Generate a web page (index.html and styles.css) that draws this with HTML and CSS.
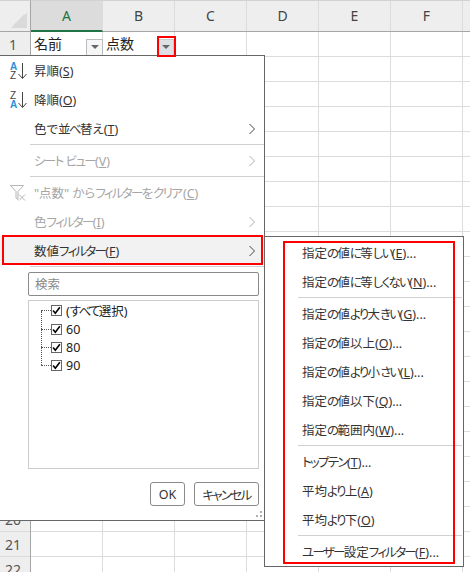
FILE: index.html
```html
<!DOCTYPE html>
<html lang="ja">
<head>
<meta charset="utf-8">
<title>数値フィルター</title>
<link rel="stylesheet" href="styles.css">
</head>
<body>
<div class="sheet">
  <div class="corner"><span class="corner-tri"></span></div>
  <div class="col-heads">
    <div class="col-head selected">A</div>
    <div class="col-head">B</div>
    <div class="col-head">C</div>
    <div class="col-head">D</div>
    <div class="col-head">E</div>
    <div class="col-head">F</div>
    <div class="col-head rest"></div>
  </div>
  <div class="row-heads">
    <div class="row-head">1</div><div class="row-head">2</div><div class="row-head">3</div><div class="row-head">4</div>
    <div class="row-head">5</div><div class="row-head">6</div><div class="row-head">7</div><div class="row-head">8</div>
    <div class="row-head">9</div><div class="row-head">10</div><div class="row-head">11</div><div class="row-head">12</div>
    <div class="row-head">13</div><div class="row-head">14</div><div class="row-head">15</div><div class="row-head">16</div>
    <div class="row-head">17</div><div class="row-head">18</div><div class="row-head">19</div><div class="row-head">20</div>
    <div class="row-head">21</div><div class="row-head">22</div>
  </div>
  <div class="cells">
    <div class="data-row">
      <div class="cell"><span class="cell-text">名前</span><span class="fbtn"><i></i></span></div>
      <div class="cell"><span class="cell-text">点数</span><span class="fbtn active"><i></i></span></div>
    </div>
  </div>
</div>

<div class="menu main-menu">
  <div class="item">
    <svg class="ico" width="30" height="29" viewBox="0 0 30 29"><text x="10" y="14" class="az-a">A</text><text x="10" y="22.5" class="az-z">Z</text><path d="M22.5 7v15M18.5 18l4 4.500 4-4.500" class="az-arrow"/></svg>
    <span>昇順(<u>S</u>)</span>
  </div>
  <div class="item">
    <svg class="ico" width="30" height="29" viewBox="0 0 30 29"><text x="10" y="13.500" class="az-z">Z</text><text x="10" y="22.500" class="az-a">A</text><path d="M22.5 7v15M18.5 18l4 4.500 4-4.500" class="az-arrow"/></svg>
    <span>降順(<u>O</u>)</span>
  </div>
  <div class="item"><span>色で<span class="k">並べ</span>替え(<u>T</u>)</span><svg class="chev" width="8" height="12" viewBox="0 0 8 12"><path d="M1.500 1l5 5-5 5"/></svg></div>
  <div class="sep"></div>
  <div class="item off"><span><span class="k">シート</span> <span class="k">ビュー</span>(<u>V</u>)</span><svg class="chev" width="8" height="12" viewBox="0 0 8 12"><path d="M1.500 1l5 5-5 5"/></svg></div>
  <div class="sep"></div>
  <div class="item off">
    <svg class="ico" width="30" height="29" viewBox="0 0 30 29"><path d="M10.500 7.500h13l-5.500 6v8l-2-1.500v-6.500z" class="funnel"/><path d="M19 16.500l6 6M25 16.500l-6 6" class="funnel-x"/></svg>
    <span>"点数" から<span class="k">フィルター</span>を<span class="k">クリ</span>ア(<u>C</u>)</span>
  </div>
  <div class="item off"><span>色<span class="k">フィルター</span>(<u>I</u>)</span><svg class="chev" width="8" height="12" viewBox="0 0 8 12"><path d="M1.500 1l5 5-5 5"/></svg></div>
  <div class="item current"><span>数値<span class="k">フィルター</span>(<u>F</u>)</span><svg class="chev" width="8" height="12" viewBox="0 0 8 12"><path d="M1.500 1l5 5-5 5"/></svg></div>
  <div class="sep"></div>
  <div class="filter-body">
    <div class="search">検索</div>
    <div class="tree">
      <div class="tree-row"><span class="check"><svg width="9" height="9" viewBox="0 0 10 10"><path d="M1.200 5l2.500 3 5-6.500"/></svg></span><span>(<span class="k">すべて</span>選択)</span></div>
      <div class="tree-row"><span class="check"><svg width="9" height="9" viewBox="0 0 10 10"><path d="M1.200 5l2.500 3 5-6.500"/></svg></span><span>60</span></div>
      <div class="tree-row"><span class="check"><svg width="9" height="9" viewBox="0 0 10 10"><path d="M1.200 5l2.500 3 5-6.500"/></svg></span><span>80</span></div>
      <div class="tree-row"><span class="check"><svg width="9" height="9" viewBox="0 0 10 10"><path d="M1.200 5l2.500 3 5-6.500"/></svg></span><span>90</span></div>
    </div>
    <div class="actions">
      <div class="btn ok">OK</div>
      <div class="btn cancel"><span class="k">キャンセル</span></div>
    </div>
  </div>
  <svg class="grip" width="8" height="8" viewBox="0 0 8 8"><path d="M5 0h2v2H5zM1 4h2v2H1zM5 4h2v2H5z"/></svg>
</div>

<div class="menu sub-menu">
  <div class="item"><span>指定<span class="k">の</span>値<span class="k">に</span>等<span class="k">しい</span>(<u>E</u>)...</span></div>
  <div class="item"><span>指定<span class="k">の</span>値<span class="k">に</span>等<span class="k">しくない</span>(<u>N</u>)...</span></div>
  <div class="sep"></div>
  <div class="item"><span>指定<span class="k">の</span>値<span class="k">より</span>大<span class="k">きい</span>(<u>G</u>)...</span></div>
  <div class="item"><span>指定<span class="k">の</span>値以上(<u>O</u>)...</span></div>
  <div class="item"><span>指定<span class="k">の</span>値<span class="k">より</span>小<span class="k">さい</span>(<u>L</u>)...</span></div>
  <div class="item"><span>指定<span class="k">の</span>値以下(<u>Q</u>)...</span></div>
  <div class="item"><span>指定<span class="k">の</span>範囲内(<u>W</u>)...</span></div>
  <div class="sep"></div>
  <div class="item"><span><span class="k">トップテン</span>(<u>T</u>)...</span></div>
  <div class="item"><span>平均<span class="k">より</span>上(<u>A</u>)</span></div>
  <div class="item"><span>平均<span class="k">より</span>下(<u>O</u>)</span></div>
  <div class="sep"></div>
  <div class="item"><span><span class="k">ユーザー</span>設定<span class="k">フィルター</span>(<u>F</u>)...</span></div>
</div>

<div class="mark mark-btn"></div>
<div class="mark mark-item"></div>
<div class="mark mark-sub"></div>
</body>
</html>
```

FILE: styles.css
```css
* { box-sizing: border-box; }

html, body {
  margin: 0;
  padding: 0;
}

body {
  position: relative;
  width: 470px;
  height: 572px;
  overflow: hidden;
  background: #fff;
  color: #333;
  font-family: "Noto Sans", "Noto Sans CJK JP", sans-serif;
  font-size: 12.500px;
  font-feature-settings: "palt";
}

u { text-underline-offset: 1px; }

/* narrow kana runs, as Meiryo UI sets them */
.k { letter-spacing: -1.700px; }

/* sheet */
.sheet {
  display: grid;
  grid-template-columns: 31px 1fr;
  grid-template-rows: 32px 1fr;
  width: 470px;
  height: 572px;
}

.corner {
  display: flex;
  align-items: flex-end;
  justify-content: flex-end;
  padding: 0 3px 3px 0;
  background: #eee;
  border-top: 1px solid #d2d2d2;
  border-right: 1px solid #a6a6a6;
  border-bottom: 1px solid #a6a6a6;
}

.corner-tri {
  width: 16px;
  height: 16px;
  background: linear-gradient(135deg, transparent 50%, #dadada 50%);
}

.col-heads {
  display: flex;
  background: #eee;
  border-top: 1px solid #d2d2d2;
  border-bottom: 1px solid #a6a6a6;
}

.col-head {
  display: flex;
  flex: 0 0 72px;
  align-items: center;
  justify-content: center;
  padding-bottom: 1px;
  border-right: 1px solid #dcdcdc;
  color: #444;
  font-size: 14px;
}

.col-head.selected {
  height: 31px;
  padding-top: 1px;
  background: #dcdcdc;
  border-bottom: 2px solid #217346;
  color: #217346;
}

.col-head.rest {
  flex: 1;
  border-right: 0;
}

.row-heads {
  display: flex;
  flex-direction: column;
  background: #eee;
  border-right: 1px solid #a6a6a6;
}

.row-head {
  display: flex;
  flex: 0 0 25px;
  align-items: center;
  justify-content: center;
  padding-right: 4px;
  border-bottom: 1px solid #dcdcdc;
  color: #555;
  font-size: 14px;
}

.cells {
  background-color: #fff;
  background-image:
    repeating-linear-gradient(90deg, transparent 0 71px, #dcdcdc 71px 72px),
    repeating-linear-gradient(180deg, transparent 0 24px, #dcdcdc 24px 25px);
}

.data-row {
  display: flex;
  height: 24px;
}

.cell {
  display: flex;
  flex: 0 0 72px;
  align-items: center;
  justify-content: space-between;
  padding: 0 0 0 3px;
  color: #222;
  font-size: 14px;
}

.cell + .cell { padding-right: 1px; }

.cell-text { margin-bottom: 2px; }

.fbtn {
  display: flex;
  align-items: center;
  justify-content: center;
  width: 17px;
  height: 17px;
  margin-top: 6px;
  background: #f6f6f6;
  border: 1px solid #b9bdc2;
}

.fbtn i {
  width: 0;
  height: 0;
  border-top: 4px solid #666;
  border-left: 4px solid transparent;
  border-right: 4px solid transparent;
}

.fbtn.active { background: #dde1e6; border-color: #c8ccd1; }

/* menus */
.menu {
  position: absolute;
  display: flex;
  flex-direction: column;
  background: #fff;
  border: 1px solid #666;
}

.main-menu {
  top: 55px;
  left: 0;
  width: 265px;
  height: 466px;
  border-left: 0;
}

.sub-menu {
  top: 236px;
  left: 264px;
  width: 200px;
  height: 331px;
  padding-top: 1px;
}

.item {
  position: relative;
  display: flex;
  flex: 0 0 29px;
  align-items: center;
  justify-content: space-between;
  padding: 0 8px 0 34px;
  white-space: nowrap;
}

.sub-menu .item { padding-left: 37px; }

.item.off { color: #a6a6a6; }
.item.current { background: #f2f2f2; }

.sep {
  flex: 0 0 1px;
  margin: 1px 0 1px 30px;
  background: #d0d0d0;
}

.sub-menu .sep { margin: 1px 1px 1px 33px; }

.ico {
  position: absolute;
  top: 0;
  left: 0;
}

.az-a, .az-z {
  font-family: "Liberation Sans", sans-serif;
  font-size: 10px;
  font-weight: 700;
  font-feature-settings: normal;
}

.az-a { fill: #2b8fd8; }
.az-z { fill: #444; font-weight: 400; }

.az-arrow {
  fill: none;
  stroke: #444;
  stroke-width: 1;
}

.funnel {
  fill: #fff;
  stroke: #b5b5b5;
  stroke-width: 1;
}

.funnel-x {
  fill: none;
  stroke: #b5b5b5;
  stroke-width: 1;
}

.chev path {
  fill: none;
  stroke: #444;
  stroke-width: 1;
}

.off .chev path { stroke: #b0b0b0; }

.filter-body {
  display: flex;
  flex-direction: column;
  padding: 4px 5px 0 28px;
}

.search {
  display: flex;
  align-items: center;
  height: 24px;
  padding: 0 0 2px 6px;
  border: 1px solid #8a8a8a;
  border-radius: 2px;
  color: #8a8a8a;
}

.tree {
  position: relative;
  display: flex;
  flex-direction: column;
  height: 169px;
  margin-top: 4px;
  padding: 0 0 0 22px;
  border: 1px solid #ccc;
  color: #222;
}

.tree::before {
  content: "";
  position: absolute;
  top: 10px;
  left: 12px;
  height: 54px;
  border-left: 1px dotted #555;
}

.tree-row {
  position: relative;
  display: flex;
  flex: 0 0 18px;
  align-items: center;
  gap: 4px;
}

.tree-row::before {
  content: "";
  position: absolute;
  top: 9px;
  left: -10px;
  width: 10px;
  border-top: 1px dotted #555;
}

.check {
  display: flex;
  align-items: center;
  justify-content: center;
  width: 11px;
  height: 11px;
  border: 1px solid #666;
  background: #fff;
}

.check path {
  fill: none;
  stroke: #000;
  stroke-width: 1.800;
}

.actions {
  display: flex;
  justify-content: flex-end;
  gap: 9px;
  margin-top: 13px;
}

.btn {
  display: flex;
  align-items: center;
  justify-content: center;
  height: 24px;
  border: 1px solid #8a8a8a;
  border-radius: 3px;
  color: #333;
}

.btn.ok { width: 35px; }
.btn.cancel { width: 65px; }

.grip {
  position: absolute;
  right: 1px;
  bottom: 1px;
  fill: #b0b0b0;
}

/* red annotation frames */
.mark {
  position: absolute;
  border: 2px solid #f00;
  pointer-events: none;
}

.mark-btn { top: 36px; left: 157px; width: 19px; height: 21px; }
.mark-item { top: 235px; left: 2px; width: 261px; height: 30px; }
.mark-sub { top: 241px; left: 283px; width: 172px; height: 323px; }
```
